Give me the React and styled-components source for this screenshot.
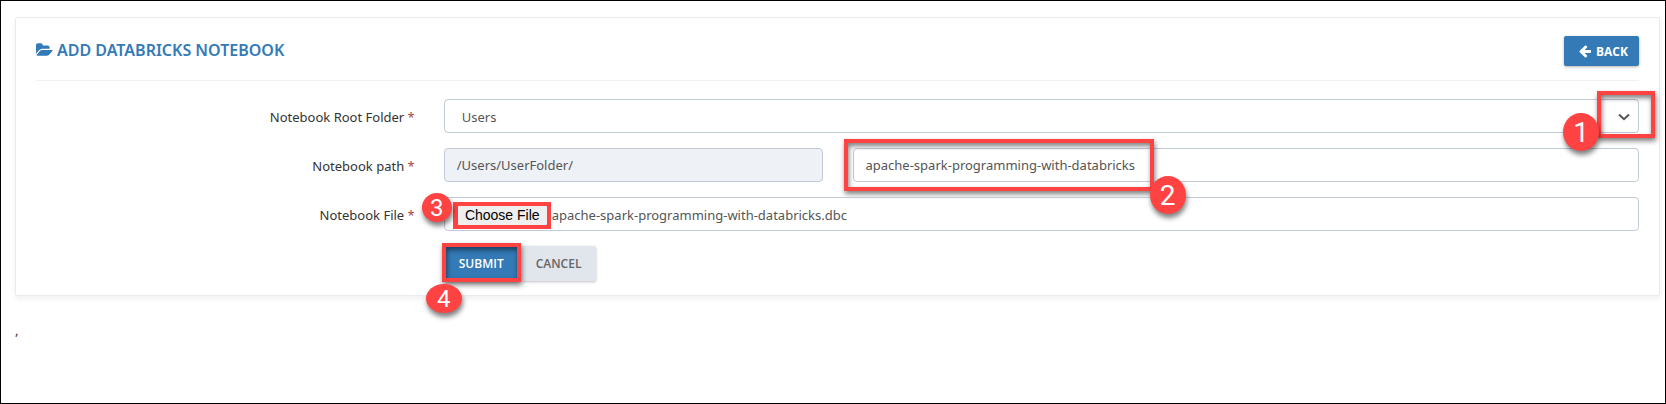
import React, {useState} from 'react';
import styled, {createGlobalStyle} from 'styled-components';

const GlobalStyle = createGlobalStyle`
  * {
    box-sizing: border-box;
  }

  body {
    margin: 0;
    background-color: #fff;
    color: #333;
    font-family: 'Noto Sans', 'Open Sans', sans-serif;
    font-size: 13px;
  }
`;

const Page = styled.div`
  min-height: 100vh;
  padding: 16px 5px 16px 14px;
  border: 1px solid #000;
`;

const Card = styled.section`
  padding: 18px 20px 14px;
  border: 1px solid #e7ecf1;
  border-radius: 2px;
  box-shadow: 0 3px 5px rgba(0, 0, 0, 0.06);
`;

const CardHeader = styled.header`
  display: flex;
  justify-content: space-between;
  height: 45px;
  margin-bottom: 18px;
  border-bottom: 1px solid #eef1f5;
`;

const Title = styled.h1`
  display: flex;
  align-items: center;
  gap: 4px;
  height: 28px;
  margin: 0;
  color: #337ab7;
  font-size: 16px;
  font-weight: 600;
  text-transform: uppercase;
`;

const Icon = styled.svg`
  flex: none;
  width: ${({$width}) => $width}px;
  height: ${({$height}) => $height}px;
  fill: currentColor;
`;

const BackButton = styled.button`
  display: flex;
  align-items: center;
  gap: 4px;
  height: 30px;
  padding: 0 11px 0 14px;
  border: 0;
  border-radius: 2px;
  background-color: #337ab7;
  box-shadow: 0 1px 3px rgba(0, 0, 0, 0.3);
  color: #fff;
  font: 700 12px 'Open Sans', sans-serif;
  text-transform: uppercase;
  cursor: pointer;
`;

const Form = styled.form`
  display: grid;
  gap: 15px;
`;

const FormRow = styled.div`
  display: grid;
  grid-template-columns: calc(25% - 22px) 1fr;
  column-gap: 29px;
  align-items: center;
`;

const Label = styled.label`
  grid-column: 1;
  padding-top: 2px;
  text-align: right;
  line-height: 18px;
`;

const Required = styled.span`
  color: #a94442;
`;

const Field = styled.div`
  position: relative;
  grid-column: 2;
  min-width: 0;
`;

const PathFields = styled.div`
  display: grid;
  grid-template-columns: 379fr 787fr;
  column-gap: 30px;
  grid-column: 2;
`;

const Input = styled.input`
  display: block;
  width: 100%;
  height: 34px;
  padding: 0 12px;
  border: 1px solid #c2cad8;
  border-radius: 4px;
  background-color: ${({readOnly}) => readOnly ? '#eef1f5' : '#fff'};
  color: #555;
  font: 13px 'Noto Sans', sans-serif;
`;

const Select = styled.select`
  display: block;
  width: 100%;
  height: 34px;
  padding: 2px 17px 0;
  border: 1px solid #c2cad8;
  border-radius: 4px;
  background-color: #fff;
  color: #555;
  font: 13px 'Noto Sans', sans-serif;
  appearance: none;
`;

const Chevron = styled.svg`
  position: absolute;
  top: 14px;
  right: 9px;
  width: 12px;
  height: 8px;
  pointer-events: none;
`;

const FileBox = styled.label`
  display: flex;
  align-items: center;
  gap: 4px;
  height: 34px;
  padding: 2px 12px 0;
  border: 1px solid #c2cad8;
  border-radius: 4px;
  color: #555;
  cursor: pointer;
`;

const HiddenFileInput = styled.input`
  position: absolute;
  width: 1px;
  height: 1px;
  opacity: 0;
`;

const ChooseFile = styled.span`
  width: 91px;
  height: 21px;
  border: 1px solid #767676;
  border-radius: 2px;
  background-color: #efefef;
  color: #000;
  font: 14px/18px 'Liberation Sans', sans-serif;
  text-align: center;
`;

const Actions = styled.div`
  display: flex;
  gap: 2px;
  grid-column: 2;
`;

const ActionItem = styled.div`
  position: relative;
`;

const ActionButton = styled.button`
  height: 35px;
  padding: 0 15px;
  border: 0;
  border-radius: 2px;
  background-color: ${({$primary}) => $primary ? '#337ab7' : '#e1e5ec'};
  box-shadow: 0 1px 3px rgba(0, 0, 0, 0.25);
  color: ${({$primary}) => $primary ? '#fff' : '#666'};
  font: 600 12px 'Open Sans', sans-serif;
  text-transform: uppercase;
  cursor: pointer;
`;

const Footnote = styled.p`
  margin: 25px 0 0;
  line-height: 18px;
`;

// red frame drawn over the control of a step
const Highlight = styled.span`
  position: absolute;
  top: ${({$top}) => $top}px;
  left: ${({$left}) => $left};
  width: ${({$width}) => $width}px;
  height: ${({$height}) => $height}px;
  border: 4px solid #ff4343;
  box-shadow: ${({$flat}) => $flat ? 'none' : '1px 3px 5px rgba(0, 0, 0, 0.5), inset 1px 3px 5px rgba(0, 0, 0, 0.5)'};
  pointer-events: none;
`;

const StepBadge = styled.span`
  position: absolute;
  z-index: 1;
  top: ${({$top}) => $top}px;
  left: ${({$left}) => $left};
  display: flex;
  align-items: center;
  justify-content: center;
  width: ${({$width}) => $width}px;
  height: ${({$height}) => $height}px;
  border-radius: 50%;
  background-color: #ff4343;
  box-shadow: 1px 4px 5px rgba(0, 0, 0, 0.5);
  color: #fff;
  font: ${({$size}) => $size}px Roboto, sans-serif;
  pointer-events: none;
`;

const FolderIcon = () => (
  <Icon viewBox="0 0 1920 1792" $width={17} $height={16}>
    <path d="M1879 952q0 31-31 66l-336 396q-43 51-120.5 86.5t-143.5 35.5h-1088q-34 0-60.5-13t-26.5-43q0-31 31-66l336-396q43-51 120.5-86.5t143.5-35.5h1088q34 0 60.5 13t26.5 43zm-343-344v160h-832q-94 0-197 47.5t-164 119.5l-337 396-5 6q0-4-.5-12.5t-.5-12.5v-960q0-92 66-158t158-66h320q92 0 158 66t66 158v32h544q92 0 158 66t66 158z" />
  </Icon>
);

const ArrowIcon = () => (
  <Icon viewBox="0 0 1792 1792" $width={14} $height={14}>
    <path d="M1664 896v128q0 53-32.5 90.5t-84.5 37.5h-704l293 294q38 36 38 90t-38 90l-75 76q-37 37-90 37-52 0-91-37l-651-652q-37-37-37-90 0-52 37-91l651-650q38-38 91-38 52 0 90 38l75 74q38 38 38 91t-38 91l-293 293h704q52 0 84.5 37.5t32.5 90.5z" />
  </Icon>
);

const RequiredLabel = ({ htmlFor, children }) => (
  <Label htmlFor={htmlFor}>{children} <Required>*</Required></Label>
);

const App = () => {
  const [name, setName] = useState('apache-spark-programming-with-databricks');
  const [fileName, setFileName] = useState('apache-spark-programming-with-databricks.dbc');

  const onFileChange = (e) => {
    if(e.target.files.length){
      setFileName(e.target.files[0].name);
    }
  };

  return (
    <Page>
      <GlobalStyle />
      <Card>
        <CardHeader>
          <Title><FolderIcon />Add Databricks Notebook</Title>
          <BackButton type="button"><ArrowIcon />Back</BackButton>
        </CardHeader>
        <Form onSubmit={(e) => e.preventDefault()}>
          <FormRow>
            <RequiredLabel htmlFor="root">Notebook Root Folder</RequiredLabel>
            <Field>
              <Select id="root" defaultValue="Users">
                <option>Users</option>
              </Select>
              <Chevron viewBox="0 0 12 8">
                <path d="M1 1.5 6 6.2 11 1.5" fill="none" stroke="#555" strokeWidth="2" />
              </Chevron>
              <Highlight $top={-8} $left="calc(100% - 42px)" $width={58} $height={47} />
              <StepBadge $top={14} $left="calc(100% - 76px)" $width={36} $height={38} $size={28}>1</StepBadge>
            </Field>
          </FormRow>
          <FormRow>
            <RequiredLabel htmlFor="path">Notebook path</RequiredLabel>
            <PathFields>
              <Input id="path" value="/Users/UserFolder/" readOnly />
              <Field>
                <Input aria-label="Notebook name" value={name} onChange={(e) => setName(e.target.value)} />
                <Highlight $top={-9} $left="-9px" $width={310} $height={52} />
                <StepBadge $top={28} $left="297px" $width={36} $height={38} $size={28}>2</StepBadge>
              </Field>
            </PathFields>
          </FormRow>
          <FormRow>
            <RequiredLabel htmlFor="file">Notebook File</RequiredLabel>
            <Field>
              <FileBox>
                <HiddenFileInput id="file" type="file" onChange={onFileChange} />
                <ChooseFile>Choose File</ChooseFile>
                {fileName}
              </FileBox>
              <Highlight $top={5} $left="9px" $width={98} $height={27} $flat />
              <StepBadge $top={-4} $left="-22px" $width={30} $height={29} $size={24}>3</StepBadge>
            </Field>
          </FormRow>
          <FormRow>
            <Actions>
              <ActionItem>
                <ActionButton type="submit" $primary>Submit</ActionButton>
                <Highlight $top={-3} $left="-2px" $width={79} $height={39} />
                <StepBadge $top={38} $left="-18px" $width={36} $height={29} $size={24}>4</StepBadge>
              </ActionItem>
              <ActionButton type="button">Cancel</ActionButton>
            </Actions>
          </FormRow>
        </Form>
      </Card>
      <Footnote>,</Footnote>
    </Page>
  );
};

export default App;
